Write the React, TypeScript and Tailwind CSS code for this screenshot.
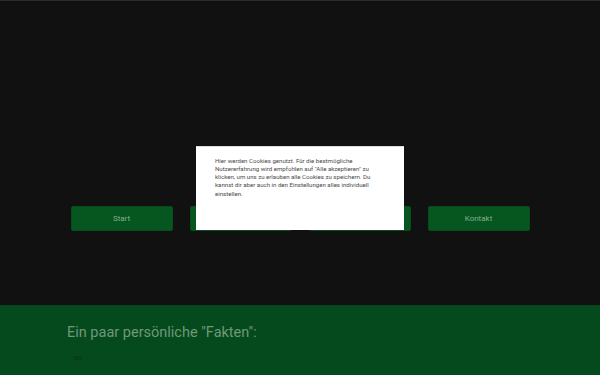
import React from "react";

export default function App() {
  const items = ["Start", "Über mich", "Projekte", "Kontakt"];
  return (
    <div
      className="relative w-[600px] h-[375px] overflow-hidden bg-[#111111]"
      style={{ fontFamily: "Roboto, 'Liberation Sans', sans-serif" }}
    >
      <div className="h-px bg-[#2c2c2c]" />
      <div className="flex flex-col h-[374px]">
        <div className="h-[304px] flex justify-center pt-[205px]">
          <div className="flex gap-[17px]">
            {items.map((t) => (
              <div
                key={t}
                className="w-[102px] h-[25px] rounded-[2px] bg-[#05561f] border border-[#0a4a1c] flex items-center justify-center text-[8px] text-[#86ad90]"
              >
                {t}
              </div>
            ))}
          </div>
        </div>
        <div className="flex-1 bg-[#054a1d] border-t border-[#0c3f20] pl-[67px] pt-[17px]">
          <div className="text-[14.5px] leading-[20px] text-[#6f9878]">
            Ein paar persönliche "Fakten":
          </div>
          <div className="mt-[11px] ml-[6px] text-[5px] leading-[8px] text-[#0b2e14]">
            IIZA
          </div>
        </div>
      </div>
      <div className="absolute inset-0 flex items-center justify-center">
        <div className="w-[208px] h-[84px] bg-white border-t border-[#dddddd] pl-[19px] pt-[10px]">
          <p className="w-[162px] text-[6.1px] leading-[8.3px] text-[#4a4a4a]">
            Hier werden Cookies genutzt. Für die bestmögliche Nutzererfahrung wird
            empfohlen auf "Alle akzeptieren" zu klicken, um uns zu erlauben alle
            Cookies zu speichern. Du kannst dir aber auch in den Einstellungen alles
            individuell einstellen.
          </p>
        </div>
      </div>
    </div>
  );
}
